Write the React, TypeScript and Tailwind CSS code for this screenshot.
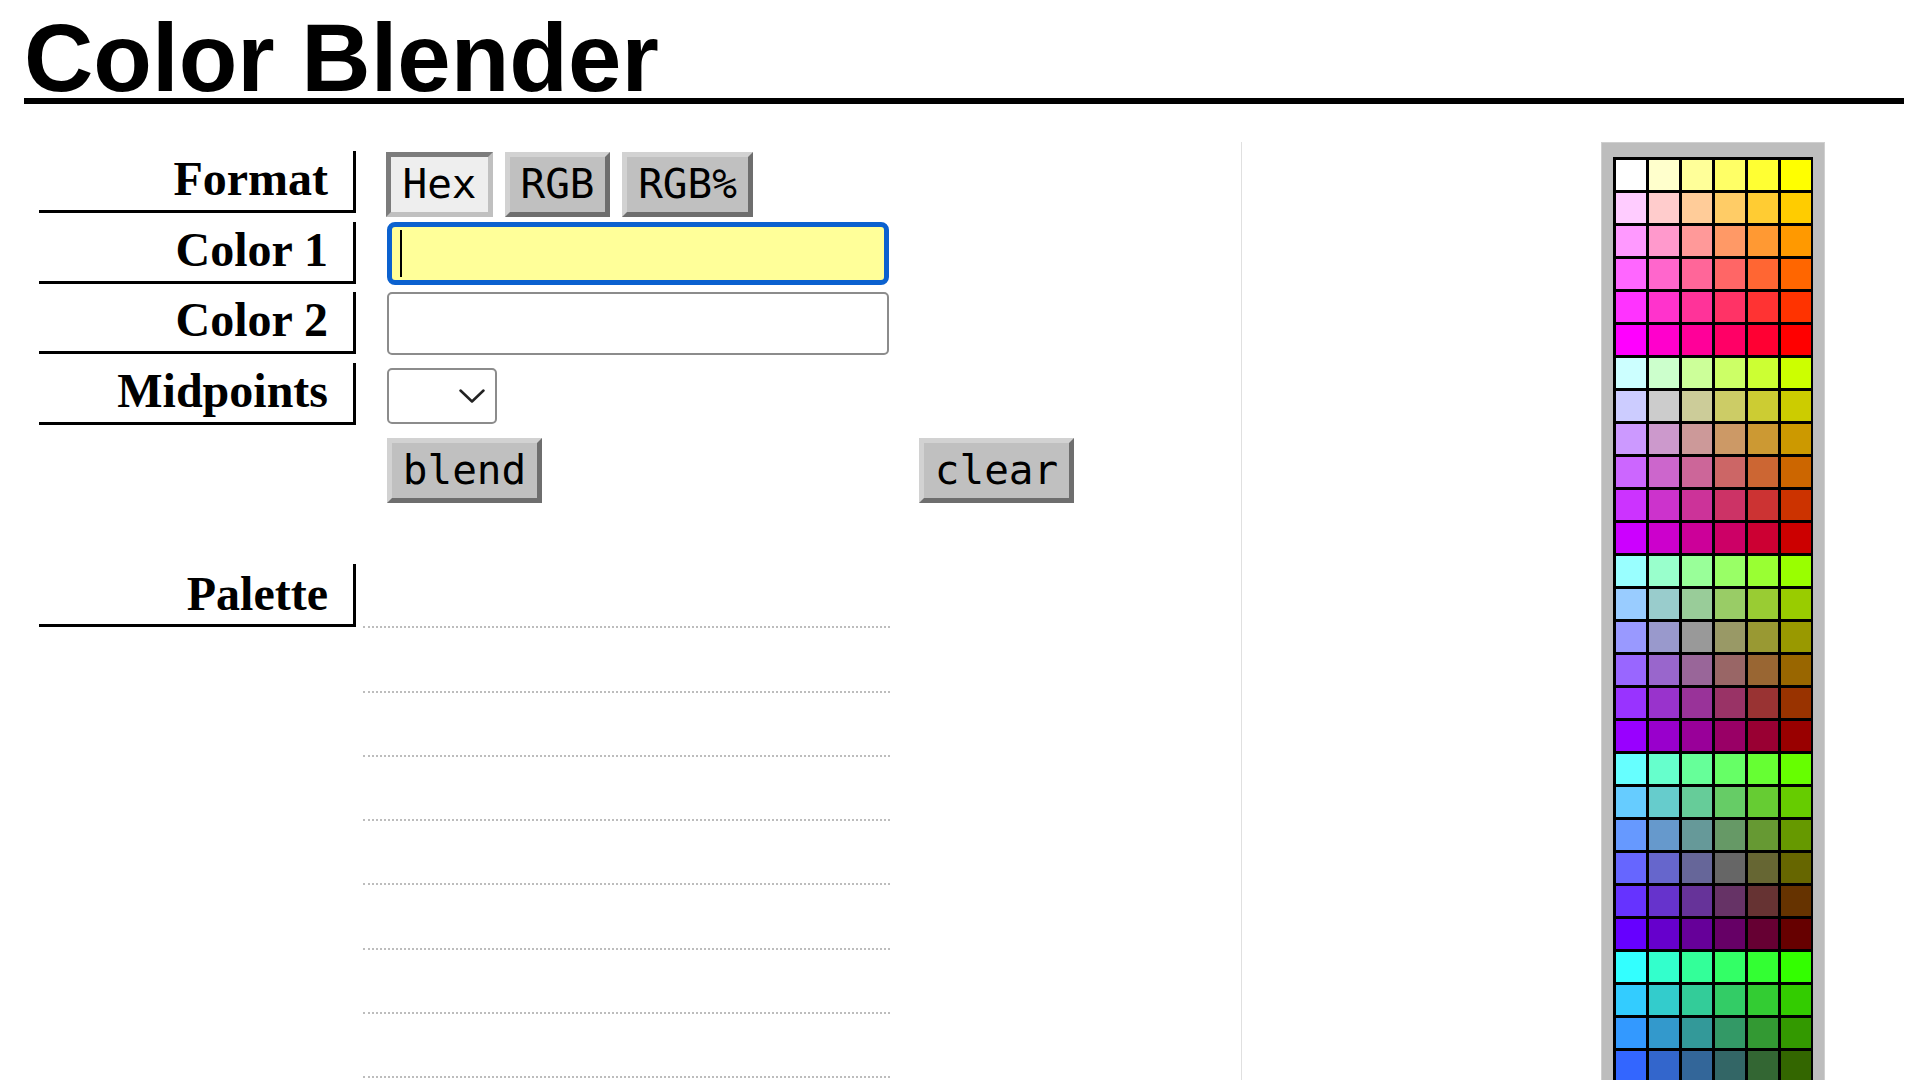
import React from "react";

const STEPS = ["ff", "cc", "99", "66", "33", "00"];

// web-safe colours: one block of six rows per red value
const SWATCHES: string[] = [];
for (const r of STEPS) {
  for (const g of STEPS) {
    for (const b of STEPS) {
      SWATCHES.push(`#${r}${g}${b}`);
    }
  }
}

const raised =
  "bg-[#c0c0c0] border-[5px] border-t-[#d2d2d2] border-l-[#d2d2d2] border-r-[#6e6e6e] border-b-[#6e6e6e]";
const pressed =
  "bg-[#eeeeee] border-[5px] border-t-[#7c7c7c] border-l-[#7c7c7c] border-r-[#c0c0c0] border-b-[#c0c0c0]";

function Label({ children, tall }: { children: React.ReactNode; tall?: boolean }) {
  return (
    <div
      className={`box-border w-[317px] shrink-0 border-b-[3px] border-r-[3px] border-black pr-[25px] text-right font-['Liberation_Serif',serif] text-[48px] font-bold leading-[56px] text-black ${
        tall ? "h-[63px] pt-[2px]" : "h-[62px]"
      }`}
    >
      {children}
    </div>
  );
}

function Btn({
  children,
  width,
  down,
}: {
  children: React.ReactNode;
  width: string;
  down?: boolean;
}) {
  return (
    <button
      type="button"
      className={`box-border flex h-[65px] items-center justify-center font-['DejaVu_Sans_Mono',monospace] text-[41px] leading-none text-black ${width} ${
        down ? pressed : raised
      }`}
    >
      {children}
    </button>
  );
}

export default function App() {
  return (
    <div className="min-h-screen bg-white">
      <h1 className="ml-[24px] mr-[16px] mt-[17px] border-b-[6px] border-black font-['Liberation_Sans',Arial,sans-serif] text-[96px] font-bold leading-[81px] text-black">
        Color Blender
      </h1>

      <div className="mt-[38px] flex">
        <div className="w-[1241px] shrink-0 pl-[39px] pt-[9px]">
          <div className="flex flex-col gap-[8.67px]">
            <div className="flex h-[62px] items-start">
              <Label>Format</Label>
              <div className="ml-[30px] mt-[1px] flex gap-[12px]">
                <Btn width="w-[107px]" down>
                  Hex
                </Btn>
                <Btn width="w-[105px]">RGB</Btn>
                <Btn width="w-[131px]">RGB%</Btn>
              </div>
            </div>

            <div className="flex h-[62px] items-start">
              <Label>Color 1</Label>
              <div className="ml-[31px] box-border flex h-[63px] w-[502px] items-center rounded-[8px] border-[5px] border-[#0b61cf] bg-[#ffff99] pl-[8px]">
                <span className="h-[47px] w-[2px] bg-black" />
              </div>
            </div>

            <div className="flex h-[62px] items-start">
              <Label>Color 2</Label>
              <div className="ml-[31px] box-border h-[63px] w-[502px] rounded-[5px] border-2 border-[#8c8c8c] bg-white" />
            </div>

            <div className="flex h-[62px] items-start">
              <Label>Midpoints</Label>
              <div className="ml-[31px] mt-[5px] box-border flex h-[56px] w-[110px] items-center justify-end rounded-[5px] border-2 border-[#8c8c8c] bg-white pr-[10px]">
                <svg width="26" height="14" viewBox="0 0 26 14" fill="none">
                  <polyline
                    points="1.5,1.5 13,12.5 24.5,1.5"
                    stroke="#222"
                    strokeWidth="2.5"
                    strokeLinecap="round"
                    strokeLinejoin="round"
                  />
                </svg>
              </div>
            </div>

            <div className="flex h-[62px] items-start">
              <div className="ml-[348px] mt-[4px] flex">
                <Btn width="w-[155px]">blend</Btn>
                <div className="ml-[377px]">
                  <Btn width="w-[155px]">clear</Btn>
                </div>
              </div>
            </div>
          </div>

          <div className="mt-[68.33px] flex items-start">
            <Label tall>Palette</Label>
            <div className="ml-[7px] w-[527px]">
              {Array.from({ length: 8 }).map((_, i) => (
                <div
                  key={i}
                  className="box-border h-[64.3px] border-b-2 border-dotted border-[#bdbdbd]"
                />
              ))}
            </div>
          </div>
        </div>

        <div className="border-l border-[#e0e0e0] pl-[359px]">
          <div className="box-border w-[224px] border border-[#cfcfcf] bg-[#bdbdbd] px-[11px] py-[14px]">
            <div className="grid grid-cols-6 gap-[3px] bg-black p-[2.5px]">
              {SWATCHES.map((c) => (
                <div key={c} className="h-[30px] w-[30px]" style={{ backgroundColor: c }} />
              ))}
            </div>
          </div>
        </div>
      </div>
    </div>
  );
}
